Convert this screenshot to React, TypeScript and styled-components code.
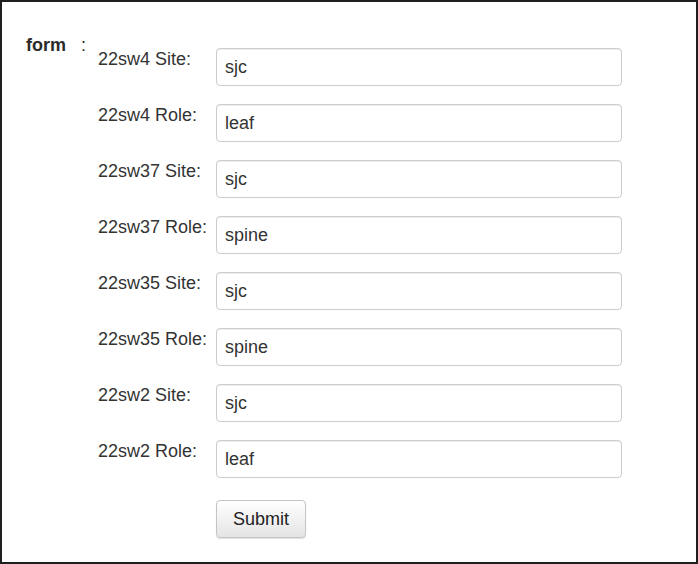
import React from 'react'
import styled, { createGlobalStyle } from 'styled-components'

const GlobalStyle = createGlobalStyle`
  html, body {
    margin: 0;
    padding: 0;
    background: #ffffff;
  }
  body {
    font-family: "Liberation Sans", Arial, Helvetica, sans-serif;
    color: #333333;
  }
`

const Frame = styled.div`
  width: 698px;
  height: 564px;
  box-sizing: border-box;
  border: 2px solid #1f1f1f;
  background: #ffffff;
  padding: 33px 0 0 24px;
  display: flex;
  align-items: flex-start;
`

const Title = styled.div`
  display: flex;
  align-items: baseline;
  width: 72px;
  font-size: 18px;
  color: #2b2b2b;
`

const TitleName = styled.span`
  font-weight: bold;
`

const Colon = styled.span`
  margin-left: 15px;
`

const Fields = styled.div`
  margin-top: 13px;
  display: flex;
  flex-direction: column;
  gap: 18px;
`

const Row = styled.div`
  display: flex;
  align-items: flex-start;
`

const Label = styled.label`
  width: 118px;
  padding-top: 1px;
  font-size: 18px;
  color: #333333;
  white-space: nowrap;
`

const Input = styled.input`
  width: 406px;
  height: 38px;
  box-sizing: border-box;
  padding: 0 8px;
  font-family: "Liberation Sans", Arial, sans-serif;
  font-size: 18px;
  color: #333333;
  border: 1px solid #cccccc;
  border-radius: 4px;
  box-shadow: inset 0 1px 1px rgba(0, 0, 0, 0.075);
  outline: none;
  background: #ffffff;
`

const Actions = styled.div`
  padding-left: 118px;
  margin-top: 4px;
`

const Button = styled.button`
  height: 38px;
  width: 90px;
  padding: 0;
  font-family: "Liberation Sans", Arial, sans-serif;
  font-size: 18px;
  color: #222222;
  border: 1px solid #c4c4c4;
  border-radius: 4px;
  background: linear-gradient(to bottom, #ffffff 0%, #f2f2f2 50%, #e4e4e4 100%);
  box-shadow: 0 1px 1px rgba(0, 0, 0, 0.12);
  cursor: pointer;
`

const fields = [
  { label: '22sw4 Site:', value: 'sjc' },
  { label: '22sw4 Role:', value: 'leaf' },
  { label: '22sw37 Site:', value: 'sjc' },
  { label: '22sw37 Role:', value: 'spine' },
  { label: '22sw35 Site:', value: 'sjc' },
  { label: '22sw35 Role:', value: 'spine' },
  { label: '22sw2 Site:', value: 'sjc' },
  { label: '22sw2 Role:', value: 'leaf' },
]

export default function App() {
  return (
    <>
      <GlobalStyle />
      <Frame>
        <Title>
          <TitleName>form</TitleName>
          <Colon>:</Colon>
        </Title>
        <Fields>
          {fields.map((f, i) => (
            <Row key={i}>
              <Label>{f.label}</Label>
              <Input defaultValue={f.value} />
            </Row>
          ))}
          <Actions>
            <Button type="button">Submit</Button>
          </Actions>
        </Fields>
      </Frame>
    </>
  )
}
